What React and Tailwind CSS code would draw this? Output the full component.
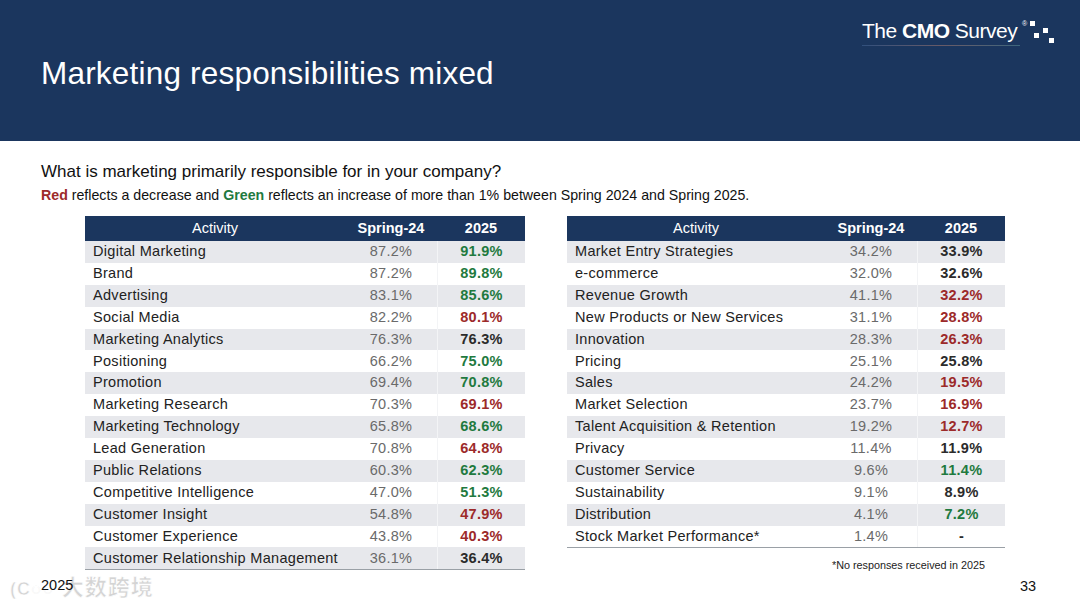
import React from "react";

const G = "text-[#1f7a3f]";
const R = "text-[#9c2a2a]";
const N = "text-[#2b2b2b]";

const left = [
  ["Digital Marketing", "87.2%", "91.9%", G],
  ["Brand", "87.2%", "89.8%", G],
  ["Advertising", "83.1%", "85.6%", G],
  ["Social Media", "82.2%", "80.1%", R],
  ["Marketing Analytics", "76.3%", "76.3%", N],
  ["Positioning", "66.2%", "75.0%", G],
  ["Promotion", "69.4%", "70.8%", G],
  ["Marketing Research", "70.3%", "69.1%", R],
  ["Marketing Technology", "65.8%", "68.6%", G],
  ["Lead Generation", "70.8%", "64.8%", R],
  ["Public Relations", "60.3%", "62.3%", G],
  ["Competitive Intelligence", "47.0%", "51.3%", G],
  ["Customer Insight", "54.8%", "47.9%", R],
  ["Customer Experience", "43.8%", "40.3%", R],
  ["Customer Relationship Management", "36.1%", "36.4%", N],
];

const right = [
  ["Market Entry Strategies", "34.2%", "33.9%", N],
  ["e-commerce", "32.0%", "32.6%", N],
  ["Revenue Growth", "41.1%", "32.2%", R],
  ["New Products or New Services", "31.1%", "28.8%", R],
  ["Innovation", "28.3%", "26.3%", R],
  ["Pricing", "25.1%", "25.8%", N],
  ["Sales", "24.2%", "19.5%", R],
  ["Market Selection", "23.7%", "16.9%", R],
  ["Talent Acquisition & Retention", "19.2%", "12.7%", R],
  ["Privacy", "11.4%", "11.9%", N],
  ["Customer Service", "9.6%", "11.4%", G],
  ["Sustainability", "9.1%", "8.9%", N],
  ["Distribution", "4.1%", "7.2%", G],
  ["Stock Market Performance*", "1.4%", "-", N],
];

function Table({ rows, width }) {
  return (
    <div className={"border-b border-[#9aa0a6] " + width}>
      <div className="flex h-[25px] items-center bg-[#1b365e] text-white text-[14.5px]">
        <div className="flex-1 text-center">Activity</div>
        <div className="w-[92px] text-center font-bold">Spring-24</div>
        <div className="w-[88px] text-center font-bold">2025</div>
      </div>
      {rows.map((r, i) => (
        <div
          key={r[0]}
          className={
            "flex h-[21.9px] items-center text-[14.5px] tracking-[0.3px] " +
            (i % 2 === 0 ? "bg-[#e7e8ec]" : "bg-white")
          }
        >
          <div className="flex-1 pl-2 text-[#222] whitespace-nowrap">{r[0]}</div>
          <div className="w-[92px] text-center text-[#6a6a6a]">{r[1]}</div>
          <div className={"w-[88px] h-full flex items-center justify-center font-bold border-l border-[#f3f4f6] " + r[3]}>
            {r[2]}
          </div>
        </div>
      ))}
    </div>
  );
}

function Logo() {
  return (
    <div className="relative w-[200px] h-[30px]">
      <div className="absolute left-0 top-[-3px] text-white text-[21px] tracking-[-0.5px] whitespace-nowrap leading-none">
        <span className="font-light">The </span>
        <span className="font-bold">CMO</span>
        <span className="font-light"> Survey</span>
      </div>
      <span className="absolute left-[160px] top-[-4px] text-white text-[7px]">®</span>
      <div className="absolute left-[168px] top-[-2px] w-[5px] h-[5px] bg-white" />
      <div className="absolute left-[181px] top-[5px] w-[5px] h-[5px] bg-white" />
      <div className="absolute left-[172px] top-[10px] w-[5px] h-[5px] bg-white" />
      <div className="absolute left-[187px] top-[15px] w-[5px] h-[5px] bg-white" />
      <div className="absolute left-0 top-[22px] w-[158px] h-px bg-gradient-to-r from-[#3b5b8a] via-[#8a6a6a] to-[#4a7a8a] opacity-70" />
    </div>
  );
}

export default function App() {
  return (
    <div
      className="w-[1080px] h-[608px] bg-white relative overflow-hidden flex flex-col"
      style={{ fontFamily: '"Liberation Sans", Arial, "Noto Sans CJK SC", sans-serif' }}
    >
      <div className="h-[141px] bg-[#1b365e] relative shrink-0">
        <div className="absolute left-[862px] top-[23px]">
          <Logo />
        </div>
        <h1 className="absolute left-[41px] top-[58px] text-white text-[31.5px] leading-none tracking-[0.2px]">
          Marketing responsibilities mixed
        </h1>
      </div>
      <div className="pl-[41px] pt-[20px]">
        <div className="text-[17px] text-[#111] leading-[22px]">What is marketing primarily responsible for in your company?</div>
        <div className="text-[14.2px] text-[#111] mt-[3px] leading-[18px]">
          <span className="font-bold text-[#9c2a2a]">Red</span> reflects a decrease and{" "}
          <span className="font-bold text-[#1f7a3f]">Green</span> reflects an increase of more than 1% between Spring 2024 and Spring 2025.
        </div>
      </div>
      <div className="flex pl-[85px] gap-[42px] mt-[12px] items-start">
        <Table rows={left} width="w-[440px]" />
        <div className="flex flex-col">
          <Table rows={right} width="w-[438px]" />
          <div className="text-[10.8px] text-[#222] text-right pr-[20px] mt-[9px]">*No responses received in 2025</div>
        </div>
      </div>
      <div className="absolute left-[10px] top-[571px] text-[22px] text-[#d4d4d4] font-bold tracking-[1px] pointer-events-none whitespace-nowrap" style={{ WebkitTextStroke: "0.6px #ffffff" }}>
        <span className="text-[18px]">(C○○</span> 大数跨境
      </div>
      <div className="absolute left-[41px] top-[575px] text-[14.5px] text-[#111]">2025</div>
      <div className="absolute left-[1020px] top-[576px] text-[14.5px] text-[#111]">33</div>
    </div>
  );
}
